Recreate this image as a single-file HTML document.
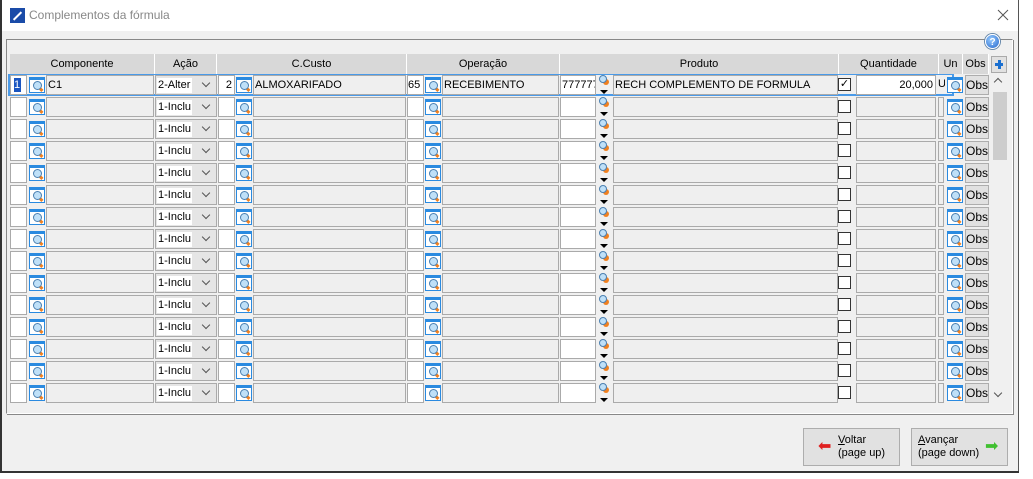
<!DOCTYPE html>
<html><head><meta charset="utf-8"><style>
*{box-sizing:border-box;margin:0;padding:0}
body{width:1033px;height:479px;background:#fff;font-family:"Liberation Sans",Arial,sans-serif;font-size:11px;color:#000;position:relative;overflow:hidden}
#win{position:absolute;left:0;top:0;width:1019px;height:472px;background:#f0f0f0}
#bl{position:absolute;left:0;top:0;width:2px;height:473px;background:#333}
#br{position:absolute;left:1018px;top:0;width:1px;height:473px;background:#555}
#bb{position:absolute;left:0;top:471px;width:1019px;height:2px;background:#333}
#title{position:absolute;left:0;top:0;width:100%;height:31px;background:#fff}
#title .t{position:absolute;left:29px;top:8px;font-size:12px;color:#888}
#logo{position:absolute;left:10px;top:8px;width:15px;height:15px;background:#1a4ba8}
#logo:after{content:"";position:absolute;left:2px;top:7px;width:11px;height:2px;background:#fff;transform:rotate(-45deg)}
#close{position:absolute;left:997px;top:9px}
#panel{position:absolute;left:6px;top:39px;width:1007px;height:375px;border:1px solid #888;border-right-color:#fff;border-bottom-color:#fff;box-shadow:1px 1px 0 #888}
.help{position:absolute;left:985px;top:34px;width:15px;height:15px;border-radius:50%;background:radial-gradient(circle at 40% 35%,#9cf,#2266cc);color:#fff;font-weight:bold;font-size:10px;text-align:center;line-height:15px;border:1px solid #fff;box-shadow:0 0 0 1px #68a}
.hd{position:absolute;top:54px;height:20px;background:#d8d8d8;border-right:1px solid #fff;text-align:center;line-height:20px;font-size:11px}
.plus{position:absolute;left:991px;top:56px;width:16px;height:17px;background:#e1e1e1;border:1px solid #aaa}
.plus:before{content:"";position:absolute;left:3px;top:6px;width:8px;height:3px;background:#1a6fd0}
.plus:after{content:"";position:absolute;left:6px;top:3px;width:3px;height:9px;background:#1a6fd0}
.r{position:absolute;left:0;width:1000px;height:22px}
.r>div{position:absolute;top:1px;height:20px}
.w{background:#fff;border:1px solid #aaa}
.g{background:#efefef;border:1px solid #aaa}
.ic{top:3px!important;width:16px!important;height:16px!important;background:#fff;border:1px solid #2a8ae0;border-top:3px solid #2a8ae0}
.ic:after{content:"";position:absolute;left:3px;top:1px;width:7px;height:7px;border-radius:50%;border:1px solid #4a7fb0;background:#bfe0f8}
.ic:before{content:"";position:absolute;left:9px;top:8px;width:4px;height:3px;background:#f08020;transform:rotate(45deg)}
.sel{background:#e5e5e5;border:1px solid #aaa}
.sel span{position:absolute;left:1px;top:2px;width:35px;height:15px;background:#fff;line-height:15px;padding-left:1px;white-space:nowrap;overflow:hidden}
.sel i{position:absolute;left:47px;top:4px;width:6px;height:6px;border-right:1px solid #555;border-bottom:1px solid #555;transform:rotate(45deg)}
.sm{width:14px}
.sm:before{content:"";position:absolute;left:2px;top:0;width:6px;height:6px;border-radius:50%;border:1px solid #4a7fb0;background:#bfe0f8;box-shadow:3px 3px 0 -1px #f08020}
.sm:after{content:"";position:absolute;left:3px;top:15px;border-left:4px solid transparent;border-right:4px solid transparent;border-top:4px solid #000}
.cb{top:4px!important;width:13px!important;height:13px!important;background:#fff;border:1px solid #333}
.ob{background:#e1e1e1;border:1px solid #adadad;text-align:center;line-height:18px;font-size:12px}
.tx{line-height:18px;padding-left:1px;white-space:nowrap;overflow:hidden}
#sb{position:absolute;left:991px;top:75px;width:17px;height:330px}
#sb .th{position:absolute;left:2px;top:17px;width:14px;height:68px;background:#cdcdcd}
.btn{position:absolute;top:428px;width:97px;height:38px;background:#e1e1e1;border:1px solid #adadad;font-size:11px;line-height:13px}
</style></head><body>
<div id="win">
<div id="title"><div id="logo"></div><div class="t">Complementos da fórmula</div><svg id="close" width="12" height="12"><path d="M1 1L11 11M11 1L1 11" stroke="#555" stroke-width="1"/></svg></div>
<div id="panel"></div>
<div class="help">?</div>
<div class="hd" style="left:10px;width:145px">Componente</div>
<div class="hd" style="left:155px;width:62px">Ação</div>
<div class="hd" style="left:217px;width:190px">C.Custo</div>
<div class="hd" style="left:407px;width:153px">Operação</div>
<div class="hd" style="left:560px;width:279px">Produto</div>
<div class="hd" style="left:839px;width:100px">Quantidade</div>
<div class="hd" style="left:939px;width:24px">Un</div>
<div class="hd" style="left:963px;width:26px">Obs</div>
<div class="plus"></div>
<div id="sb"><div style="position:absolute;left:4px;top:4px;width:6px;height:6px;border-left:1px solid #555;border-top:1px solid #555;transform:rotate(45deg)"></div><div class="th"></div><div style="position:absolute;left:4px;top:315px;width:6px;height:6px;border-right:1px solid #555;border-bottom:1px solid #555;transform:rotate(45deg)"></div></div>

<div class="r" style="top:74px"><div style="left:8px;top:0;width:946px;height:22px;border:2px solid #4a9ae8;border-top-width:1px;border-bottom-width:2px"></div>
<div class="w" style="left:10px;width:17px"><span style="position:absolute;left:3px;top:2px;width:7px;height:14px;background:#1a55c0;color:#fff;line-height:14px;font-size:11px">1</span></div>
<div class="ic" style="left:29px"></div><div class="g tx" style="left:46px;width:108px">C1</div>
<div class="sel" style="left:155px;width:62px"><span>2-Alter</span><i></i></div>
<div class="w tx" style="left:218px;width:17px;text-align:right;padding-right:2px">2</div><div class="ic" style="left:236px"></div><div class="g tx" style="left:253px;width:153px">ALMOXARIFADO</div>
<div class="w tx" style="left:407px;width:17px;padding-left:0">65</div><div class="ic" style="left:425px"></div><div class="g tx" style="left:442px;width:117px">RECEBIMENTO</div>
<div class="w tx" style="left:560px;width:36px">777777</div><div class="sm" style="left:597px"></div><div class="g tx" style="left:613px;width:225px">RECH COMPLEMENTO DE FORMULA</div>
<div class="cb" style="left:838px;font-size:11px;line-height:10px;text-align:center">✓</div><div class="w tx" style="left:856px;width:80px;text-align:right;padding-right:2px">20,000</div><div class="tx" style="left:937px;width:8px">U</div><div class="ic" style="left:947px"></div><div class="ob" style="left:965px;width:24px">Obs</div></div>

<div class="r" style="top:96px"><div class="w" style="left:10px;width:17px"></div><div class="ic" style="left:29px"></div><div class="g" style="left:46px;width:108px"></div><div class="sel" style="left:155px;width:62px"><span>1-Inclu</span><i></i></div><div class="w" style="left:218px;width:17px"></div><div class="ic" style="left:236px"></div><div class="g" style="left:253px;width:153px"></div><div class="w" style="left:407px;width:17px"></div><div class="ic" style="left:425px"></div><div class="g" style="left:442px;width:117px"></div><div class="w" style="left:560px;width:36px"></div><div class="sm" style="left:597px"></div><div class="g" style="left:613px;width:225px"></div><div class="cb" style="left:838px"></div><div class="g" style="left:856px;width:80px"></div><div class="g" style="left:938px;width:6px"></div><div class="ic" style="left:947px"></div><div class="ob" style="left:965px;width:24px">Obs</div></div>
<div class="r" style="top:118px"><div class="w" style="left:10px;width:17px"></div><div class="ic" style="left:29px"></div><div class="g" style="left:46px;width:108px"></div><div class="sel" style="left:155px;width:62px"><span>1-Inclu</span><i></i></div><div class="w" style="left:218px;width:17px"></div><div class="ic" style="left:236px"></div><div class="g" style="left:253px;width:153px"></div><div class="w" style="left:407px;width:17px"></div><div class="ic" style="left:425px"></div><div class="g" style="left:442px;width:117px"></div><div class="w" style="left:560px;width:36px"></div><div class="sm" style="left:597px"></div><div class="g" style="left:613px;width:225px"></div><div class="cb" style="left:838px"></div><div class="g" style="left:856px;width:80px"></div><div class="g" style="left:938px;width:6px"></div><div class="ic" style="left:947px"></div><div class="ob" style="left:965px;width:24px">Obs</div></div>
<div class="r" style="top:140px"><div class="w" style="left:10px;width:17px"></div><div class="ic" style="left:29px"></div><div class="g" style="left:46px;width:108px"></div><div class="sel" style="left:155px;width:62px"><span>1-Inclu</span><i></i></div><div class="w" style="left:218px;width:17px"></div><div class="ic" style="left:236px"></div><div class="g" style="left:253px;width:153px"></div><div class="w" style="left:407px;width:17px"></div><div class="ic" style="left:425px"></div><div class="g" style="left:442px;width:117px"></div><div class="w" style="left:560px;width:36px"></div><div class="sm" style="left:597px"></div><div class="g" style="left:613px;width:225px"></div><div class="cb" style="left:838px"></div><div class="g" style="left:856px;width:80px"></div><div class="g" style="left:938px;width:6px"></div><div class="ic" style="left:947px"></div><div class="ob" style="left:965px;width:24px">Obs</div></div>
<div class="r" style="top:162px"><div class="w" style="left:10px;width:17px"></div><div class="ic" style="left:29px"></div><div class="g" style="left:46px;width:108px"></div><div class="sel" style="left:155px;width:62px"><span>1-Inclu</span><i></i></div><div class="w" style="left:218px;width:17px"></div><div class="ic" style="left:236px"></div><div class="g" style="left:253px;width:153px"></div><div class="w" style="left:407px;width:17px"></div><div class="ic" style="left:425px"></div><div class="g" style="left:442px;width:117px"></div><div class="w" style="left:560px;width:36px"></div><div class="sm" style="left:597px"></div><div class="g" style="left:613px;width:225px"></div><div class="cb" style="left:838px"></div><div class="g" style="left:856px;width:80px"></div><div class="g" style="left:938px;width:6px"></div><div class="ic" style="left:947px"></div><div class="ob" style="left:965px;width:24px">Obs</div></div>
<div class="r" style="top:184px"><div class="w" style="left:10px;width:17px"></div><div class="ic" style="left:29px"></div><div class="g" style="left:46px;width:108px"></div><div class="sel" style="left:155px;width:62px"><span>1-Inclu</span><i></i></div><div class="w" style="left:218px;width:17px"></div><div class="ic" style="left:236px"></div><div class="g" style="left:253px;width:153px"></div><div class="w" style="left:407px;width:17px"></div><div class="ic" style="left:425px"></div><div class="g" style="left:442px;width:117px"></div><div class="w" style="left:560px;width:36px"></div><div class="sm" style="left:597px"></div><div class="g" style="left:613px;width:225px"></div><div class="cb" style="left:838px"></div><div class="g" style="left:856px;width:80px"></div><div class="g" style="left:938px;width:6px"></div><div class="ic" style="left:947px"></div><div class="ob" style="left:965px;width:24px">Obs</div></div>
<div class="r" style="top:206px"><div class="w" style="left:10px;width:17px"></div><div class="ic" style="left:29px"></div><div class="g" style="left:46px;width:108px"></div><div class="sel" style="left:155px;width:62px"><span>1-Inclu</span><i></i></div><div class="w" style="left:218px;width:17px"></div><div class="ic" style="left:236px"></div><div class="g" style="left:253px;width:153px"></div><div class="w" style="left:407px;width:17px"></div><div class="ic" style="left:425px"></div><div class="g" style="left:442px;width:117px"></div><div class="w" style="left:560px;width:36px"></div><div class="sm" style="left:597px"></div><div class="g" style="left:613px;width:225px"></div><div class="cb" style="left:838px"></div><div class="g" style="left:856px;width:80px"></div><div class="g" style="left:938px;width:6px"></div><div class="ic" style="left:947px"></div><div class="ob" style="left:965px;width:24px">Obs</div></div>
<div class="r" style="top:228px"><div class="w" style="left:10px;width:17px"></div><div class="ic" style="left:29px"></div><div class="g" style="left:46px;width:108px"></div><div class="sel" style="left:155px;width:62px"><span>1-Inclu</span><i></i></div><div class="w" style="left:218px;width:17px"></div><div class="ic" style="left:236px"></div><div class="g" style="left:253px;width:153px"></div><div class="w" style="left:407px;width:17px"></div><div class="ic" style="left:425px"></div><div class="g" style="left:442px;width:117px"></div><div class="w" style="left:560px;width:36px"></div><div class="sm" style="left:597px"></div><div class="g" style="left:613px;width:225px"></div><div class="cb" style="left:838px"></div><div class="g" style="left:856px;width:80px"></div><div class="g" style="left:938px;width:6px"></div><div class="ic" style="left:947px"></div><div class="ob" style="left:965px;width:24px">Obs</div></div>
<div class="r" style="top:250px"><div class="w" style="left:10px;width:17px"></div><div class="ic" style="left:29px"></div><div class="g" style="left:46px;width:108px"></div><div class="sel" style="left:155px;width:62px"><span>1-Inclu</span><i></i></div><div class="w" style="left:218px;width:17px"></div><div class="ic" style="left:236px"></div><div class="g" style="left:253px;width:153px"></div><div class="w" style="left:407px;width:17px"></div><div class="ic" style="left:425px"></div><div class="g" style="left:442px;width:117px"></div><div class="w" style="left:560px;width:36px"></div><div class="sm" style="left:597px"></div><div class="g" style="left:613px;width:225px"></div><div class="cb" style="left:838px"></div><div class="g" style="left:856px;width:80px"></div><div class="g" style="left:938px;width:6px"></div><div class="ic" style="left:947px"></div><div class="ob" style="left:965px;width:24px">Obs</div></div>
<div class="r" style="top:272px"><div class="w" style="left:10px;width:17px"></div><div class="ic" style="left:29px"></div><div class="g" style="left:46px;width:108px"></div><div class="sel" style="left:155px;width:62px"><span>1-Inclu</span><i></i></div><div class="w" style="left:218px;width:17px"></div><div class="ic" style="left:236px"></div><div class="g" style="left:253px;width:153px"></div><div class="w" style="left:407px;width:17px"></div><div class="ic" style="left:425px"></div><div class="g" style="left:442px;width:117px"></div><div class="w" style="left:560px;width:36px"></div><div class="sm" style="left:597px"></div><div class="g" style="left:613px;width:225px"></div><div class="cb" style="left:838px"></div><div class="g" style="left:856px;width:80px"></div><div class="g" style="left:938px;width:6px"></div><div class="ic" style="left:947px"></div><div class="ob" style="left:965px;width:24px">Obs</div></div>
<div class="r" style="top:294px"><div class="w" style="left:10px;width:17px"></div><div class="ic" style="left:29px"></div><div class="g" style="left:46px;width:108px"></div><div class="sel" style="left:155px;width:62px"><span>1-Inclu</span><i></i></div><div class="w" style="left:218px;width:17px"></div><div class="ic" style="left:236px"></div><div class="g" style="left:253px;width:153px"></div><div class="w" style="left:407px;width:17px"></div><div class="ic" style="left:425px"></div><div class="g" style="left:442px;width:117px"></div><div class="w" style="left:560px;width:36px"></div><div class="sm" style="left:597px"></div><div class="g" style="left:613px;width:225px"></div><div class="cb" style="left:838px"></div><div class="g" style="left:856px;width:80px"></div><div class="g" style="left:938px;width:6px"></div><div class="ic" style="left:947px"></div><div class="ob" style="left:965px;width:24px">Obs</div></div>
<div class="r" style="top:316px"><div class="w" style="left:10px;width:17px"></div><div class="ic" style="left:29px"></div><div class="g" style="left:46px;width:108px"></div><div class="sel" style="left:155px;width:62px"><span>1-Inclu</span><i></i></div><div class="w" style="left:218px;width:17px"></div><div class="ic" style="left:236px"></div><div class="g" style="left:253px;width:153px"></div><div class="w" style="left:407px;width:17px"></div><div class="ic" style="left:425px"></div><div class="g" style="left:442px;width:117px"></div><div class="w" style="left:560px;width:36px"></div><div class="sm" style="left:597px"></div><div class="g" style="left:613px;width:225px"></div><div class="cb" style="left:838px"></div><div class="g" style="left:856px;width:80px"></div><div class="g" style="left:938px;width:6px"></div><div class="ic" style="left:947px"></div><div class="ob" style="left:965px;width:24px">Obs</div></div>
<div class="r" style="top:338px"><div class="w" style="left:10px;width:17px"></div><div class="ic" style="left:29px"></div><div class="g" style="left:46px;width:108px"></div><div class="sel" style="left:155px;width:62px"><span>1-Inclu</span><i></i></div><div class="w" style="left:218px;width:17px"></div><div class="ic" style="left:236px"></div><div class="g" style="left:253px;width:153px"></div><div class="w" style="left:407px;width:17px"></div><div class="ic" style="left:425px"></div><div class="g" style="left:442px;width:117px"></div><div class="w" style="left:560px;width:36px"></div><div class="sm" style="left:597px"></div><div class="g" style="left:613px;width:225px"></div><div class="cb" style="left:838px"></div><div class="g" style="left:856px;width:80px"></div><div class="g" style="left:938px;width:6px"></div><div class="ic" style="left:947px"></div><div class="ob" style="left:965px;width:24px">Obs</div></div>
<div class="r" style="top:360px"><div class="w" style="left:10px;width:17px"></div><div class="ic" style="left:29px"></div><div class="g" style="left:46px;width:108px"></div><div class="sel" style="left:155px;width:62px"><span>1-Inclu</span><i></i></div><div class="w" style="left:218px;width:17px"></div><div class="ic" style="left:236px"></div><div class="g" style="left:253px;width:153px"></div><div class="w" style="left:407px;width:17px"></div><div class="ic" style="left:425px"></div><div class="g" style="left:442px;width:117px"></div><div class="w" style="left:560px;width:36px"></div><div class="sm" style="left:597px"></div><div class="g" style="left:613px;width:225px"></div><div class="cb" style="left:838px"></div><div class="g" style="left:856px;width:80px"></div><div class="g" style="left:938px;width:6px"></div><div class="ic" style="left:947px"></div><div class="ob" style="left:965px;width:24px">Obs</div></div>
<div class="r" style="top:382px"><div class="w" style="left:10px;width:17px"></div><div class="ic" style="left:29px"></div><div class="g" style="left:46px;width:108px"></div><div class="sel" style="left:155px;width:62px"><span>1-Inclu</span><i></i></div><div class="w" style="left:218px;width:17px"></div><div class="ic" style="left:236px"></div><div class="g" style="left:253px;width:153px"></div><div class="w" style="left:407px;width:17px"></div><div class="ic" style="left:425px"></div><div class="g" style="left:442px;width:117px"></div><div class="w" style="left:560px;width:36px"></div><div class="sm" style="left:597px"></div><div class="g" style="left:613px;width:225px"></div><div class="cb" style="left:838px"></div><div class="g" style="left:856px;width:80px"></div><div class="g" style="left:938px;width:6px"></div><div class="ic" style="left:947px"></div><div class="ob" style="left:965px;width:24px">Obs</div></div>

<div class="btn" style="left:803px"><span style="position:absolute;left:14px;top:11px;color:#e02020;font-size:16px;line-height:14px">&#x2B05;</span><span style="position:absolute;left:34px;top:5px"><u>V</u>oltar<br>(page up)</span></div>
<div class="btn" style="left:911px"><span style="position:absolute;left:6px;top:5px"><u>A</u>vançar<br>(page down)</span><span style="position:absolute;left:73px;top:11px;color:#40c030;font-size:16px;line-height:14px">&#x27A1;</span></div>
</div>
<div id="bl"></div><div id="br"></div><div id="bb"></div>
</body></html>
